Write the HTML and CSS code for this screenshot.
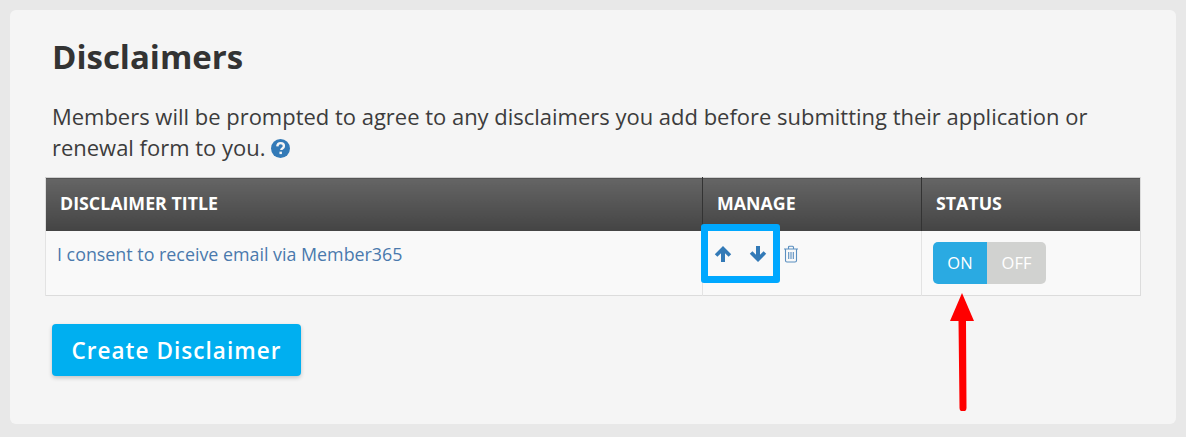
FILE: index.html
```html
<!DOCTYPE html>
<html lang="en">
<head>
<meta charset="utf-8">
<title>Disclaimers</title>
<link rel="stylesheet" href="styles.css">
</head>
<body>
<main class="card">
  <h1 class="title">Disclaimers</h1>
  <p class="intro">Members will be prompted to agree to any disclaimers you add before submitting their application or renewal form to you.
    <svg class="help" viewBox="0 0 20 20" aria-hidden="true"><circle cx="10" cy="10" r="10" fill="#337ab7"/><path d="M6.600 7.800C6.800 5.600 8.200 4.400 10.200 4.400c2 0 3.400 1.200 3.400 2.900 0 1.300-.7 2-1.700 2.700-.8.5-1.100.9-1.100 1.700" fill="none" stroke="#f5f5f5" stroke-width="2.500"/><rect x="8.900" y="13.300" width="2.600" height="2.600" fill="#f5f5f5"/></svg>
  </p>
  <table class="grid">
    <thead>
      <tr>
        <th class="col-title">DISCLAIMER TITLE</th>
        <th class="col-manage">MANAGE</th>
        <th class="col-status">STATUS</th>
      </tr>
    </thead>
    <tbody>
      <tr>
        <td><a class="link" href="#">I consent to receive email via Member365</a></td>
        <td>
          <div class="manage">
            <svg class="arrow" viewBox="0 0 18 18" aria-hidden="true"><path d="M9 1 .8 9.200 3.400 11.800 7 8.200V17h4V8.200l3.600 3.600 2.600-2.600z" fill="#337ab7"/></svg>
            <svg class="arrow" viewBox="0 0 18 18" aria-hidden="true"><path d="M9 17 .8 8.800 3.400 6.200 7 9.800V1h4v8.800l3.600-3.600 2.600 2.600z" fill="#337ab7"/></svg>
            <svg class="trash" viewBox="0 0 16 18" aria-hidden="true"><path d="M1 4h14M5.500 4V2.200c0-.6.4-1 1-1h3c.6 0 1 .4 1 1V4M2.500 4v11.500c0 .9.6 1.500 1.500 1.500h8c.9 0 1.500-.6 1.500-1.500V4M5.700 7v7M8 7v7M10.300 7v7" fill="none" stroke="#5b8fc0" stroke-width="1.100"/></svg>
          </div>
        </td>
        <td>
          <div class="toggle"><span class="on">ON</span><span class="off">OFF</span></div>
        </td>
      </tr>
    </tbody>
  </table>
  <button class="create" type="button">Create Disclaimer</button>
  <div class="highlight"></div>
  <svg class="pointer" viewBox="0 0 24 118" aria-hidden="true"><path d="M12 0 24 28H16L16.500 115a3.500 3.500 0 0 1-7 0L8.500 28H0z" fill="#ff0000"/></svg>
</main>
</body>
</html>
```
FILE: styles.css
```css
* { box-sizing: border-box; }
html, body { height: 100%; }
body {
  margin: 0;
  padding: 10px 10px 13px;
  background: #e8e8e8;
  font-family: "Open Sans", "Liberation Sans", sans-serif;
  color: #333;
  overflow: hidden;
}
.card {
  position: relative;
  height: 414px;
  background: #f5f5f5;
  border-radius: 6px;
  padding: 26px 35px 0;
}
.title {
  margin: 0 0 0 7px;
  font-size: 33px;
  line-height: 41px;
  font-weight: 700;
  color: #333;
}
.intro {
  margin: 24px 0 0 7px;
  font-size: 21.980px;
  line-height: 31px;
  color: #3c3c3c;
}
.help {
  width: 19px;
  height: 19px;
  vertical-align: -2px;
}
.grid {
  width: 1096px;
  margin-top: 14px;
  border-collapse: collapse;
  table-layout: fixed;
  border: 1px solid #dcdcdc;
  border-top: 1px solid #cfcfcf;
}
.grid th {
  height: 53px;
  padding: 0 14px 2px;
  text-align: left;
  font-size: 17.800px;
  font-weight: 700;
  color: #fff;
  background: linear-gradient(#656565, #444);
}
.col-title { width: 657px; }
.col-manage { width: 219px; border-left: 1px solid #333; }
.col-status { border-left: 1px solid #333; }
.grid td {
  height: 65px;
  padding: 0;
  vertical-align: top;
  background: #f9f9f9;
  border-left: 1px solid #e3e3e3;
}
.link {
  display: block;
  padding: 11px 11px 0;
  color: #4a79ad;
  font-size: 17.850px;
  line-height: 24px;
  text-decoration: none;
}
.manage {
  display: flex;
  align-items: flex-start;
  padding: 14px 0 0 11px;
  gap: 17px;
}
.arrow { width: 18px; height: 18px; }
.trash { width: 16px; height: 18px; margin-left: -1px; }
.toggle {
  display: flex;
  width: 113px;
  height: 42px;
  margin: 11px 0 0 11px;
  border-radius: 5px;
  overflow: hidden;
  font-size: 16.500px;
}
.on, .off {
  display: flex;
  align-items: center;
  justify-content: center;
  color: #fff;
}
.on { width: 54px; background: #2aaae2; }
.off { flex: 1; background: #d1d2d0; }
.create {
  display: block;
  margin: 28px 0 0 7px;
  width: 249px;
  height: 52px;
  border: 0;
  border-radius: 4px;
  background: #00aff0;
  color: #fff;
  font-family: inherit;
  font-size: 22.500px;
  font-weight: 600;
  letter-spacing: 1.050px;
  box-shadow: 0 2px 4px rgba(0,0,0,.2);
}
.highlight {
  position: absolute;
  left: 691px;
  top: 214px;
  width: 79px;
  height: 59px;
  border: 7px solid #00a8ff;
  border-radius: 3px;
}
.pointer {
  position: absolute;
  left: 940px;
  top: 283px;
  width: 24px;
  height: 118px;
}
```
